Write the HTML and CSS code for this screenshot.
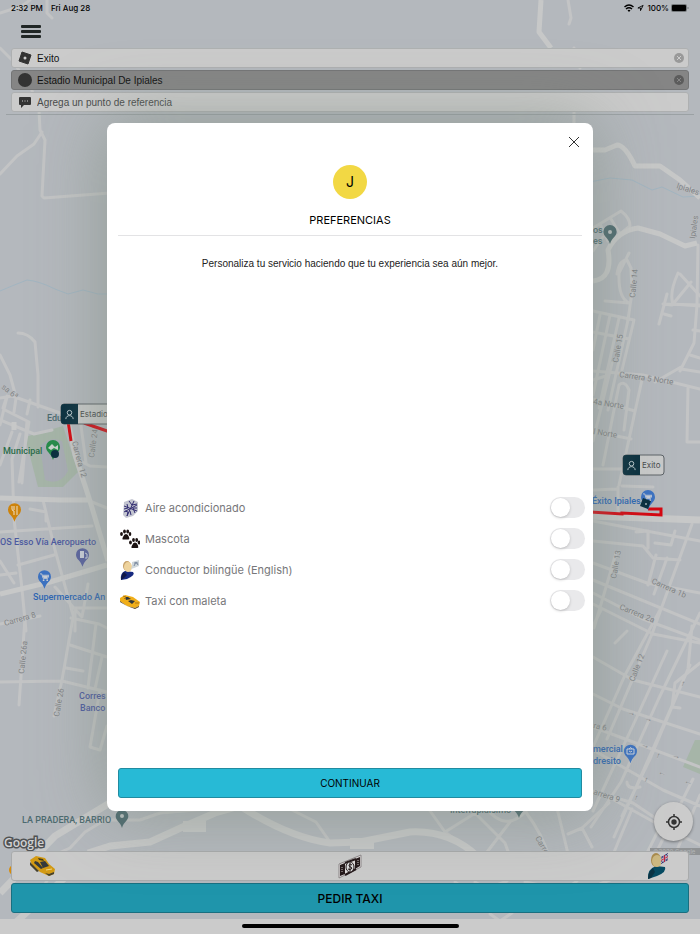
FILE: index.html
```
<!DOCTYPE html>
<html lang="es">
<head>
  <meta charset="UTF-8" />
  <meta name="viewport" content="width=device-width, initial-scale=1.0"/>
  <title>Pedir taxi</title>
  <link rel="stylesheet" href="styles.css">
</head>
<body>
  <div class="app">
    <svg class="map" viewBox="0 0 700 934" preserveAspectRatio="xMidYMid slice" aria-hidden="true">
      <defs>
        <symbol id="pin" viewBox="0 0 14 20">
          <path d="M7 0a7 7 0 0 0-7 7c0 5 5 6 7 13 2-7 7-8 7-13a7 7 0 0 0-7-7z"/>
        </symbol>
        <symbol id="cart" viewBox="0 0 10 10">
          <path d="M0 1h2l1.500 5h5L10 2.500H3" fill="none" stroke="#c9ced6"/>
          <path d="M3 3h6L8 5.500H4z" fill="#c9ced6"/>
          <circle cx="4" cy="8" r="1" fill="#c9ced6"/>
          <circle cx="8" cy="8" r="1" fill="#c9ced6"/>
        </symbol>
        <symbol id="person" viewBox="0 0 12 12">
          <g fill="none" stroke="#c6d2d6"><circle cx="6" cy="4" r="2.500"/><path d="M2 11c0-5 8-5 8 0"/></g>
        </symbol>
      </defs>

      <!-- parks -->
      <path class="park" d="M25 437l38-11 15 46-15 15H38z"/>
      <path class="track" d="M40 446q10-10 22-5l6 30q-8 15-23 9z"/>
      <path class="park" d="M695 740l-12 27 17 7v-34z"/>

      <!-- rivers -->
      <path class="river" d="M0 291q14-6 27-11 12 1 28 9l13 5 15-4 15 4h12M590 182l20-4 22 2 20 10 10-3 21 10 17-1"/>

      <!-- small streets -->
      <g class="street">
        <path d="M0 13l22-7 8-6M47 0v13l5 5M568 0l3 18-2 6"/>
        <path d="M0 48l12 12 19 28 8 22 1 20 5 10-3 56 2 2 66-5M42 132l-8 12-17 12-17 18"/>
        <path d="M18 333q10 0 17 9l3 33v32M0 355l10 20 6 22M0 398l12-2 48 17M3 408l4-12M14 412l2-14M27 414l3-14"/>
        <path d="M7 397L0 425M5 410l24 12-10 60M0 420l34 14 18-4M20 434l-8 25 2 60 8 70 4 42M27 421l-5 62M12 432L0 465"/>
        <path d="M43 500l12 50 20 72M0 532l92-6M30 509l16 3v9M0 575l16-2M18 565l36-10M76 459l14 7 17 1M86 463l-6-45M92 502l15 6M0 561l14 22M55 587l27 30 6-33M75 608h32M75 611v20"/>
        <path d="M25 618l-6 87M0 682l62-1 45 11M73 618l-11 62-8 36M0 624l40-8M66 668l17 3M70 645l37 12M71 618l28 6 8 4M96 624l-8 64M102 657l-7 32M100 690l-10 57 10 3 7-24"/>
        <path d="M52 856l18-8 15-16 20-12h35l20-7 70-6M288 808l28 14 14 20"/>
        <path d="M428 808l17 24 32-20M445 832l38 28M470 808l35 35 5 14M486 808q20 25 40 3M510 822l-26 34M525 811q18 24 24 46M557 808l12 50M568 834l14-6 27-25M582 828l10 19M632 809l-20 48M605 795l58 32 37 18M668 811l-23 46"/>
        <path d="M574 112v15M574 48l6 20M593 228l28-17q9 7 9 15l-15 12M600 224l8 17M611 219l9 15M593 251l10-14"/>
        <path d="M617 274q2-14 10-14l4 8 1 24-4 28M629 253l-10 20q-1 25 10 30M605 301l24 2"/>
        <path d="M593 311l41 9-12 50M593 332l36 7M600 315l-7 35M610 315l-17 80M619 318l-20 90M628 320l-20 90"/>
        <path d="M667 294l-8 30M663 304l9 1M664 314l7 2M678 273q-9 20-5 31l27 2M680 274l20 22M673 304l18-22M664 304l36 1"/>
        <path d="M698 245l-1 60-3 38-14 28M690 355l10 3M693 330l7 1M681 367l-26 15M681 369l19 3"/>
        <path d="M593 371l50 4 57 14M643 375l-24 110M612 363l-19 78M593 399l42 12M593 431l38 8M593 469h37M593 490l24-1M688 388l-1 54h13M624 430l5-40q-4-10-10-5l-16 80M609 375l-16 5M622 486l31 1M618 487v25"/>
        <path d="M593 521l107 20M593 541l50 5 10 12 27 2M648 532v16M636 532l12-1M655 543l16 2 4-14M667 558l-13 36M656 555l-8 30M692 524l-40 110-45 105M616 553l-22 75M593 563l54 20 53 10M593 580l107 44M593 593l50 26 57 21M593 604l60 30 47 9M601 610l-8 16"/>
        <path d="M660 610l-35 65-32 72M700 613l-41 85-38 84-30 45M667 651l-32 70-42 90M692 626l-4 43-38 90-28 57M690 665l-42 95-34 77M700 663l-25 20-3 24 8 1M593 657l40 23 67 17M593 694l30 15 77 25M593 727l107 40M593 750l70 40 37 16M627 631l-12 12M593 791l40 12 52 35M627 782q0 8 13 5M693 779l-40 80M700 795l-25 60"/>
        <path d="M60 860l-15 24M455 882l7 5M475 882l12 7 20-8M525 882l40 8 12-9M600 884l12-5M490 914l10 7 12-8"/>
      </g>

      <!-- avenues -->
      <g class="avenue">
        <path d="M541 0l-2 32 12 16M593 150h12l12-5q8 0 18 21h25l20 14 20 18M593 281q20-2 15-31 9-19 30-22l22 6 25 12 12-3"/>
        <path d="M0 498l60 2h30M68 421l7 34 15 46 18 60M0 594l50-12 57-17M14 430v-8"/>
        <path class="wide" d="M590 516l110 4M0 893l55-57 58-35M88 853l22-7 40-4 35-16 30-13 25-7M240 806q50 32 90 37l30-1 50-10q40-2 68 25M15 923l55-50"/>
        <path class="building" d="M183 821h23v11h-23zM350 838h24v11h-24z"/>
      </g>

      <!-- street names -->
      <g class="street-name">
        <text transform="translate(1 388) rotate(38)">sa 6ª</text>
        <text transform="translate(72 442) rotate(75)">Carrera 12</text>
        <text transform="translate(94 458) rotate(-82)">Calle 24f</text>
        <text transform="translate(5 626) rotate(-16)">Carrera 8</text>
        <text transform="translate(24 674) rotate(-84)">Calle 26a</text>
        <text transform="translate(59 717) rotate(-80)">Calle 26</text>
        <text transform="translate(676 188) rotate(18)">Ipiales</text>
        <text transform="translate(695 239) rotate(-82)">Ipiales</text>
        <text transform="translate(635 298) rotate(-84)">Calle 14</text>
        <text transform="translate(618 363) rotate(-80)">Calle 15</text>
        <text transform="translate(619 377) rotate(8)">Carrera 5 Norte</text>
        <text transform="translate(593 404) rotate(9)">4a Norte</text>
        <text transform="translate(593 434) rotate(9)">l Norte</text>
        <text transform="translate(616 579) rotate(-80)">Calle 13</text>
        <text transform="translate(651 583) rotate(24)">Carrera 1b</text>
        <text transform="translate(619 609) rotate(22)">Carrera 2a</text>
        <text transform="translate(634 682) rotate(-68)">Calle 12</text>
        <text transform="translate(593 728) rotate(12)">ra 6</text>
        <text transform="translate(593 794) rotate(18)">arrera 9</text>
        <text transform="translate(535 838) rotate(60)">Carrera</text>
        <text transform="translate(627 714) rotate(15)">→</text>
        <text transform="translate(644 720) rotate(15)">→</text>
        <text transform="translate(641 746) rotate(20)">→</text>
        <text transform="translate(672 757) rotate(15)">→</text>
        <text transform="translate(658 774) rotate(15)">←</text>
        <text transform="translate(684 783) rotate(15)">←</text>
        <text transform="translate(683 688) rotate(-70)">→</text>
        <text transform="translate(658 760) rotate(-70)">→</text>
        <text transform="translate(646 784) rotate(-70)">→</text>
        <text transform="translate(636 802) rotate(-70)">→</text>
      </g>

      <!-- route -->
      <path class="route" d="M68 421l3 20M84 423l26 9M590 512l32 2v-1l39 2v-6h-13"/>

      <!-- places -->
      <g class="place">
        <text class="teal" x="47" y="421">Edu</text>
        <text class="green" x="3" y="454">Municipal</text>
        <text class="violet" x="0" y="545">OS Esso Vía Aeropuerto</text>
        <text class="blue" x="33" y="600">Supermercado An</text>
        <text class="violet" x="79" y="699">Corres</text>
        <text class="violet" x="80" y="711">Banco</text>
        <text class="teal" x="22" y="823">LA PRADERA, BARRIO</text>
        <text class="teal" x="450" y="813">Interrapidísimo</text>
        <text class="teal" x="593" y="233">os</text>
        <text class="teal" x="593" y="244">es</text>
        <text class="blue" x="592" y="504">Éxito Ipiales</text>
        <text class="blue" x="593" y="752">mercial</text>
        <text class="blue" x="593" y="764">dresito</text>
      </g>
      <use href="#pin" x="46" y="440" width="14" height="20" fill="#258c49"/>
      <path d="M48 448l4-4 3 3 3-2v5l-4-2-3 2z" fill="#c9d4cc"/>
      <circle cx="55" cy="454" r="4" fill="#082e3e"/>
      <use href="#pin" x="8" y="503" width="13" height="19" fill="#cd830c"/>
      <path d="M12 506v3q0 2 2 2v4M14 506v4M17 506v9" fill="none" stroke="#eee0c6"/>
      <use href="#pin" x="76" y="548" width="13" height="19" fill="#5962a0"/>
      <path d="M80 551h4v7h-4z" fill="#ccd0dd"/>
      <path d="M85 553l2 1v4h-2" fill="none" stroke="#ccd0dd"/>
      <use href="#pin" x="38" y="570" width="13" height="19" fill="#3c72c2"/>
      <use href="#cart" x="40" y="573" width="9" height="9"/>
      <use href="#pin" x="115" y="810" width="14" height="18" fill="#4c696e"/>
      <circle cx="122" cy="816" r="2" fill="#bac0c0"/>
      <use href="#pin" x="512" y="799" width="14" height="19" fill="#4c696e"/>
      <use href="#pin" x="603" y="225" width="14" height="19" fill="#4c696e"/>
      <circle cx="610" cy="232" r="2" fill="#bac0c0"/>
      <use href="#pin" x="641" y="490" width="14" height="20" fill="#3c72c2"/>
      <use href="#cart" x="643" y="493" width="9" height="9"/>
      <path d="M643 498l8 3-3 8-8-3z" fill="#082e3e"/>
      <circle cx="646" cy="504" r="1" fill="#9eb0b6"/>
      <use href="#pin" x="624" y="744" width="13" height="20" fill="#3c72c2"/>
      <path d="M627 749h7v5h-7zM629 749q2-3 3 0M629 751q2 2 3 0" fill="none" stroke="#ccd3df"/>
      <circle cx="14" cy="870" r="5" fill="#d98c08"/>

      <g class="chip">
        <rect x="61" y="404" width="60" height="20" rx="3"/>
        <path d="M64 404h14v20H64q-3 0-3-3v-14q0-3 3-3z"/>
        <use href="#person" x="64" y="409" width="11" height="11"/>
        <text x="80" y="417">Estadio</text>
        <rect x="623" y="455" width="41" height="20" rx="3"/>
        <path d="M626 455h14v20h-14q-3 0-3-3v-14q0-3 3-3z"/>
        <use href="#person" x="626" y="460" width="11" height="11"/>
        <text x="642" y="468">Exito</text>
      </g>
      <rect x="650" y="848" width="50" height="7" fill="#909395"/>
      <text class="copyright" x="653" y="854">©2020 Google</text>
    </svg>

    <div class="statusbar">
      <span>2:32 PM</span>
      <span>Fri Aug 28</span>
      <svg class="wifi" viewBox="0 0 10 8"><path d="M0.500 3q4.500-4 9 0M2 5q3-2.500 6 0" fill="none" stroke="#000" stroke-width="1.500"/><path d="M3.500 6.200q1.500-1 3 0L5 8z"/></svg>
      <svg class="location" viewBox="0 0 8 8"><path d="M1 4l6-3-3 6V4z" fill="none" stroke="#000"/></svg>
      <span>100%</span>
      <svg class="battery" viewBox="0 0 18 8"><rect width="16" height="8" rx="2" fill="#777b7e"/><rect x="1" y="1" width="14" height="6" rx="1"/><path d="M17 3v2" stroke="#777b7e"/></svg>
    </div>

    <button class="menu" type="button" aria-label="Menú"><i></i><i></i><i></i></button>

    <form class="trip">
      <div class="field">
        <label for="from" aria-label="Origen">
          <svg viewBox="0 0 14 14"><path d="M4 1l9 3-3 9-9-3z" fill="#333" stroke="#333" stroke-linejoin="round"/><circle cx="7" cy="7" r="1.500" fill="#ccc"/></svg>
        </label>
        <input id="from" type="text" value="Exito">
        <button class="clear" type="button" aria-label="Borrar origen"><svg viewBox="0 0 10 10"><path d="M3 3l4 4M7 3L3 7"/></svg></button>
      </div>
      <div class="field active">
        <label for="to" aria-label="Destino">
          <svg viewBox="0 0 14 14"><circle cx="7" cy="7" r="7" fill="#333"/></svg>
        </label>
        <input id="to" type="text" value="Estadio Municipal De Ipiales">
        <button class="clear" type="button" aria-label="Borrar destino"><svg viewBox="0 0 10 10"><path d="M3 3l4 4M7 3L3 7"/></svg></button>
      </div>
      <div class="field">
        <label for="reference" aria-label="Referencia">
          <svg viewBox="0 0 14 14"><path d="M2 2h10q1 0 1 1v6q0 1-1 1H6l-3 3v-3H2q-1 0-1-1V3q0-1 1-1z" fill="#333"/><path d="M4 6h1M6.500 6h1M9 6h1" stroke="#ccc"/></svg>
        </label>
        <input id="reference" type="text" placeholder="Agrega un punto de referencia">
      </div>
    </form>

    <div class="map-tools">
      <span class="google">Google</span>
      <button class="locate" type="button" aria-label="Mi ubicación">
        <svg viewBox="0 0 16 16"><circle cx="8" cy="8" r="5.500" fill="none" stroke="#333" stroke-width="1.500"/><circle cx="8" cy="8" r="2.700" fill="#333"/><path d="M8 0v3M8 13v3M0 8h3M13 8h3" stroke="#333" stroke-width="1.500"/></svg>
      </button>
    </div>

    <div class="summary">
      <button type="button" aria-label="Vehículo">
        <svg viewBox="0 0 26 22">
          <path d="M1 5l6-4 9 2 4 6 6 5-1 5-5 2-9-4-8-7z" fill="#d39a13"/>
          <path d="M1 7v3l7 7 2-1-6-6zM16 18l4 3 5-2v-2l-5 2z" fill="#45412f"/>
          <path d="M6 6l3 1 5 6-2 1-7-6zM11 7l5-1 4 5-6 2z" fill="#343a3c"/>
          <path d="M9 3l5 1 1 2-5-1z" fill="#473c17"/>
          <path d="M17 15l6-1" stroke="#efd585"/>
        </svg>
      </button>
      <button type="button" aria-label="Pago en efectivo">
        <svg viewBox="0 0 26 26">
          <path d="M2 11l22-9v12L2 25z" fill="#e1dddd" stroke="#8d8789"/>
          <path d="M3 12l5-2v11l-5 2zM18 6l5-2v9l-5 3z" fill="#231719"/>
          <path d="M8 10l11-4M8 22l11-6" stroke="#231719" stroke-width="2"/>
          <ellipse cx="13" cy="14" rx="4" ry="5" fill="#ddd" stroke="#231719"/>
          <path d="M15 12q-3-2-3 1l3 2q-1 3-4 1M13 10v8" fill="none" stroke="#231719"/>
          <path d="M5 14v6M21 7v5" stroke="#c9c3c3" stroke-dasharray="1 1"/>
        </svg>
      </button>
      <button type="button" aria-label="Preferencias">
        <svg viewBox="0 0 22 26">
          <path d="M1 26q-1-10 8-13l9 1q2 5-8 9z" fill="#064a61"/>
          <path d="M1 26q0-7 5-11l2 4-4 6z" fill="#0a3344"/>
          <ellipse cx="9" cy="7" rx="5" ry="7" fill="#a98b4e"/><ellipse cx="10" cy="8" rx="5" ry="6" fill="#cbb780"/>
          <path d="M14 4l7-4v7l-7 4z" fill="#303373"/>
          <path d="M14 5l7 1M14 10l7-9" stroke="#c9c3cd"/>
          <path d="M14 7.500l7-4M17.500 2v7" stroke="#d8d0d6" stroke-width="2"/>
          <path d="M14 7.500l7-4M17.500 2v7" stroke="#bb2442"/>
        </svg>
      </button>
    </div>
    <button class="order" type="button">PEDIR TAXI</button>
    <div class="home"><span></span></div>

    <div class="overlay">
      <section class="modal" role="dialog" aria-modal="true" aria-labelledby="modal-title">
        <button class="close" type="button" aria-label="Cerrar"><svg viewBox="0 0 12 12"><path d="M1 1l10 10M11 1L1 11"/></svg></button>
        <div class="avatar">J</div>
        <h1 id="modal-title">PREFERENCIAS</h1>
        <p class="description">Personaliza tu servicio haciendo que tu experiencia sea aún mejor.</p>
        <div class="options">
          <div class="option">
            <svg viewBox="0 0 20 20">
              <path d="M4 4l8-3 6 3 0 9-5 5-7 2-3-3z" fill="#c3c5d0"/>
              <path d="M7 18l7-15M4 8l13 5M4 14l13-7M9 3l3 4 5-1M4 11l4-1-1-4M5 13l3 1-1 4M17 10l-4 0 2 5M11 17l-1-4" fill="none" stroke="#302b70"/>
            </svg>
            <label for="air">Aire acondicionado</label>
            <input id="air" type="checkbox" role="switch">
          </div>
          <div class="option">
            <svg viewBox="0 0 20 20" fill="#1b1211">
              <g id="paw"><path d="M6 5q2 0 3 3 1 3-1 2.500H4Q1.500 11 3 8q1-3 3-3z"/><ellipse cx="1.500" cy="5" rx="1.400" ry="2"/><ellipse cx="4.500" cy="2.500" rx="1.400" ry="2"/><ellipse cx="7.700" cy="2.500" rx="1.400" ry="2"/><ellipse cx="10" cy="5" rx="1.300" ry="2"/></g>
              <use href="#paw" x="9" y="8.500"/>
            </svg>
            <label for="pet">Mascota</label>
            <input id="pet" type="checkbox" role="switch">
          </div>
          <div class="option">
            <svg viewBox="0 0 20 20">
              <path d="M1 20q-1-7 4-9l8 1q3 3-6 7z" fill="#172a80"/>
              <path d="M1 20q0-5 3-8l3 3-3 3z" fill="#101847"/>
              <ellipse cx="7" cy="6" rx="4" ry="5" fill="#c5a06a"/><ellipse cx="8" cy="7" rx="4" ry="5" fill="#eed39d"/>
              <path d="M12 2l7-2v6l-5 2-3 1 1-3z" fill="#ced6da"/><path d="M14 6l2-4 2 3M14 3l4 0" fill="none" stroke="#7c8aa0"/>
            </svg>
            <label for="bilingual">Conductor bilingüe (English)</label>
            <input id="bilingual" type="checkbox" role="switch">
          </div>
          <div class="option">
            <svg viewBox="0 0 20 20">
              <path d="M0 7l5-3 8 2 7 5-1 4-4 2-8-2-7-5z" fill="#f0ae19"/>
              <path d="M0 10l7 5 8 2 4-2v1l-4 2-8-3-7-4z" fill="#54401c"/>
              <path d="M5 6l3 0 3 2-5 1zM11 9l4 1-3 3-4-3z" fill="#30373b"/>
              <path d="M3 5l3 1-2 2M15 12l4 0" fill="none" stroke="#ad7718"/>
            </svg>
            <label for="luggage">Taxi con maleta</label>
            <input id="luggage" type="checkbox" role="switch">
          </div>
        </div>
        <button class="continue" type="button">CONTINUAR</button>
      </section>
    </div>
  </div>
</body>
</html>
```
FILE: styles.css
```
* {
  box-sizing: border-box;
}
body {
  margin: 0;
  font-family: Inter, "Liberation Sans", sans-serif;
  color: #000;
}
button {
  font-family: inherit;
  padding: 0;
  border: 0;
  background: none;
  color: #000;
}
svg {
  display: block;
}
.app {
  position: relative;
  display: flex;
  flex-direction: column;
  min-height: 100vh;
  overflow: hidden;
  background: #b4b8bd;
  isolation: isolate;
}

/* map */
.map {
  position: absolute;
  inset: 0;
  z-index: -1;
  width: 100%;
  height: 100%;
}
.park {
  fill: #a6b5a8;
}
.track {
  fill: #a9adb5;
}
.river {
  fill: none;
  stroke: #a2b5c1;
}
.street {
  fill: none;
  stroke: #c3c4c5;
  stroke-width: 3;
  stroke-linejoin: round;
  stroke-linecap: round;
}
.avenue {
  fill: none;
  stroke: #c7c8c8;
  stroke-width: 5;
  stroke-linejoin: round;
}
.avenue .wide {
  stroke-width: 7;
}
.avenue .building {
  fill: #c7c8c8;
  stroke: none;
}
.street-name {
  font-family: Roboto, sans-serif;
  font-size: 8px;
  fill: #808386;
  stroke: #bcbec0;
  stroke-width: 1px;
  paint-order: stroke;
}
.route {
  fill: none;
  stroke: #d60610;
  stroke-width: 3;
}
.place {
  font-family: Roboto, sans-serif;
  font-size: 9px;
  font-weight: 500;
}
.teal {
  fill: #4c6a6f;
}
.green {
  fill: #2a6c48;
}
.violet {
  fill: #4d5aa0;
}
.blue {
  fill: #2d66b4;
}
.chip {
  font-size: 8px;
}
.chip rect {
  fill: #c9caca;
  stroke: #5c6367;
}
.chip path {
  fill: #082e3e;
}
.chip text {
  fill: #484b4d;
}
.copyright {
  font-size: 6px;
  fill: #b3b6b8;
}

/* top */
.statusbar {
  display: flex;
  align-items: center;
  height: 16px;
  padding: 0 11px;
  font-size: 8px;
  font-weight: 500;
}
.statusbar span:nth-child(2) {
  margin-left: 8px;
}
.wifi {
  width: 10px;
  height: 8px;
  margin-left: auto;
}
.location {
  width: 7px;
  height: 8px;
  margin: 0 3px;
}
.battery {
  width: 18px;
  height: 8px;
  margin-left: 2px;
}
.menu {
  display: flex;
  flex-direction: column;
  gap: 2px;
  width: 20px;
  margin: 9px 21px 10px;
}
.menu i {
  height: 3px;
  border-radius: 1px;
  background: #202625;
}
.trip {
  display: flex;
  flex-direction: column;
  gap: 2px;
  margin: 0 6px;
  padding: 0 5px 2px;
  border-bottom: 1px solid #9ba1a4;
}
.field {
  display: flex;
  align-items: center;
  gap: 5px;
  height: 20px;
  padding: 0 4px 0 6px;
  border: 1px solid #aeb0b1;
  border-radius: 3px;
  background: #cbcbcb;
}
.field.active {
  border-color: #747576;
  background: #858585;
}
.field label svg {
  width: 14px;
  height: 14px;
}
.field input {
  flex: 1;
  min-width: 0;
  padding: 0;
  border: 0;
  outline: 0;
  background: none;
  font-family: "Liberation Sans", sans-serif;
  font-size: 10px;
  color: #111;
}
.field input::placeholder {
  color: #4a4c4c;
  opacity: 1;
}
.clear {
  width: 10px;
  height: 10px;
  border-radius: 50%;
  background: #999;
}
.clear path {
  stroke: #ccc;
}
.active .clear {
  background: #5c5c5c;
}
.active .clear path {
  stroke: #858585;
}

/* bottom */
.map-tools {
  display: flex;
  align-items: flex-end;
  justify-content: space-between;
  margin-top: auto;
  padding: 0 7px 0 4px;
}
.google {
  font-family: "Open Sans", sans-serif;
  font-size: 12px;
  line-height: 16px;
  font-weight: 600;
  color: #d2d3d4;
  -webkit-text-stroke: 3px #4f5254;
  paint-order: stroke fill;
}
.locate {
  display: flex;
  align-items: center;
  justify-content: center;
  width: 39px;
  height: 39px;
  margin-bottom: 10px;
  border-radius: 50%;
  background: #cbcbcb;
  box-shadow: 0 1px 3px rgba(0,0,0,0.4);
}
.locate svg {
  width: 16px;
  height: 16px;
}
.summary {
  display: flex;
  align-items: center;
  justify-content: space-between;
  height: 30px;
  margin: 0 11px 2px;
  padding: 0 17px;
  border: 1px solid #a9abac;
  border-radius: 3px;
  background: #cbcbcb;
}
.summary svg {
  width: 26px;
  height: 26px;
}
.order {
  height: 30px;
  margin: 0 11px 6px;
  border: 1px solid #196f80;
  border-radius: 3px;
  background: #1f95ab;
  font-size: 12px;
  font-weight: 500;
}
.home {
  height: 15px;
  padding-top: 5px;
  background: #cbcbcb;
}
.home span {
  display: block;
  width: 31%;
  height: 4px;
  margin: 0 auto;
  border-radius: 2px;
  background: #000;
}

/* preferences */
.overlay {
  position: absolute;
  inset: 0;
  display: flex;
  padding: 123px 107px;
}
.modal {
  flex: 1;
  display: flex;
  flex-direction: column;
  padding: 12px 11px 13px;
  border-radius: 8px;
  background: #fff;
  box-shadow: 0 0 70px rgba(125,138,126,0.65);
}
.close {
  align-self: flex-end;
  width: 16px;
  height: 14px;
  padding: 1px 2px;
}
.close svg {
  width: 12px;
  height: 12px;
  stroke: #333;
}
.avatar {
  align-self: center;
  width: 34px;
  height: 34px;
  margin: 16px 0 13px;
  border-radius: 50%;
  background: #f2d844;
  font-size: 14px;
  line-height: 34px;
  text-align: center;
}
.modal h1 {
  margin: 0;
  padding-bottom: 7px;
  border-bottom: 1px solid #e3e3e5;
  font-size: 11px;
  line-height: 16px;
  font-weight: 400;
  text-align: center;
}
.description {
  flex: 3 1 16px;
  margin: 20px 0 0;
  font-family: "Liberation Sans", sans-serif;
  font-size: 10px;
  line-height: 16px;
  text-align: center;
  color: #222;
}
.options {
  flex: 2 1 129px;
  margin-right: -3px;
}
.option {
  display: flex;
  align-items: center;
  height: 31px;
  padding-left: 2px;
  font-size: 11px;
  color: #77777a;
}
.option svg {
  width: 20px;
  height: 20px;
}
.option label {
  flex: 1;
  padding-left: 5px;
}
.option input {
  appearance: none;
  width: 35px;
  height: 21px;
  margin: 0;
  padding: 1px;
  border-radius: 11px;
  background: #e9e9eb;
}
.option input::before {
  content: "";
  display: block;
  width: 19px;
  height: 19px;
  border-radius: 50%;
  background: #fff;
  box-shadow: 0 1px 3px rgba(0,0,0,0.2);
}
.option input:checked {
  background: #27bad6;
}
.option input:checked::before {
  margin-left: auto;
}
.continue {
  height: 30px;
  border: 1px solid #218ba0;
  border-radius: 3px;
  background: #27bad6;
  font-size: 10px;
}
```
